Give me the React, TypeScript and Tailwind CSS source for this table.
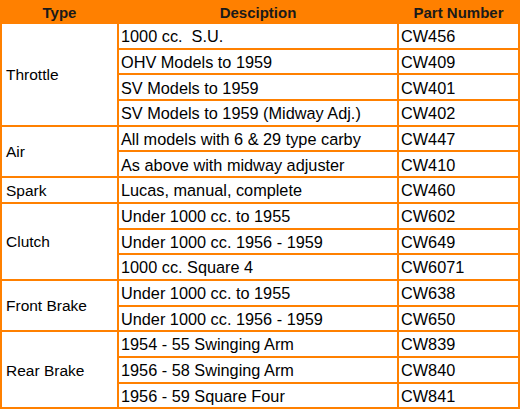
import React from "react";

type Group = { type: string; rows: [string, string][] };

const groups: Group[] = [
  {
    type: "Throttle",
    rows: [
      ["1000 cc.  S.U.", "CW456"],
      ["OHV Models to 1959", "CW409"],
      ["SV Models to 1959", "CW401"],
      ["SV Models to 1959 (Midway Adj.)", "CW402"],
    ],
  },
  {
    type: "Air",
    rows: [
      ["All models with 6 & 29 type carby", "CW447"],
      ["As above with midway adjuster", "CW410"],
    ],
  },
  { type: "Spark", rows: [["Lucas, manual, complete", "CW460"]] },
  {
    type: "Clutch",
    rows: [
      ["Under 1000 cc. to 1955", "CW602"],
      ["Under 1000 cc. 1956 - 1959", "CW649"],
      ["1000 cc. Square 4", "CW6071"],
    ],
  },
  {
    type: "Front Brake",
    rows: [
      ["Under 1000 cc. to 1955", "CW638"],
      ["Under 1000 cc. 1956 - 1959", "CW650"],
    ],
  },
  {
    type: "Rear Brake",
    rows: [
      ["1954 - 55 Swinging Arm", "CW839"],
      ["1956 - 58 Swinging Arm", "CW840"],
      ["1956 - 59 Square Four", "CW841"],
    ],
  },
];

export default function App() {
  return (
    <div className="w-[520px] h-[411px] bg-white overflow-hidden" style={{ fontFamily: '"Liberation Sans", Arial, sans-serif' }}>
      <table className="border-collapse w-[518px] table-fixed">
        <colgroup>
          <col className="w-[117px]" />
          <col className="w-[280px]" />
          <col className="w-[121px]" />
        </colgroup>
        <thead>
          <tr className="h-[22px] bg-[#ff8000] text-[15px] font-bold text-[#1a1a1a]">
            <th className="border-2 border-[#ff8000] text-center p-0 leading-none">Type</th>
            <th className="border-2 border-[#ff8000] text-center p-0 leading-none">Desciption</th>
            <th className="border-2 border-[#ff8000] text-center p-0 leading-none">Part Number</th>
          </tr>
        </thead>
        <tbody className="text-[16.3px] text-black">
          {groups.map((g) =>
            g.rows.map((r, i) => (
              <tr key={g.type + i} className="h-[25.7px]">
                {i === 0 && (
                  <td rowSpan={g.rows.length} className="border-2 border-[#ff8000] pl-[4px] pt-[1px] pb-0 align-middle leading-none text-[15.5px]">
                    {g.type}
                  </td>
                )}
                <td className="border-2 border-[#ff8000] pl-[2px] pt-[1px] pb-0 leading-none whitespace-pre">{r[0]}</td>
                <td className="border-2 border-[#ff8000] pl-[2px] pt-[1px] pb-0 leading-none">{r[1]}</td>
              </tr>
            ))
          )}
        </tbody>
      </table>
    </div>
  );
}
